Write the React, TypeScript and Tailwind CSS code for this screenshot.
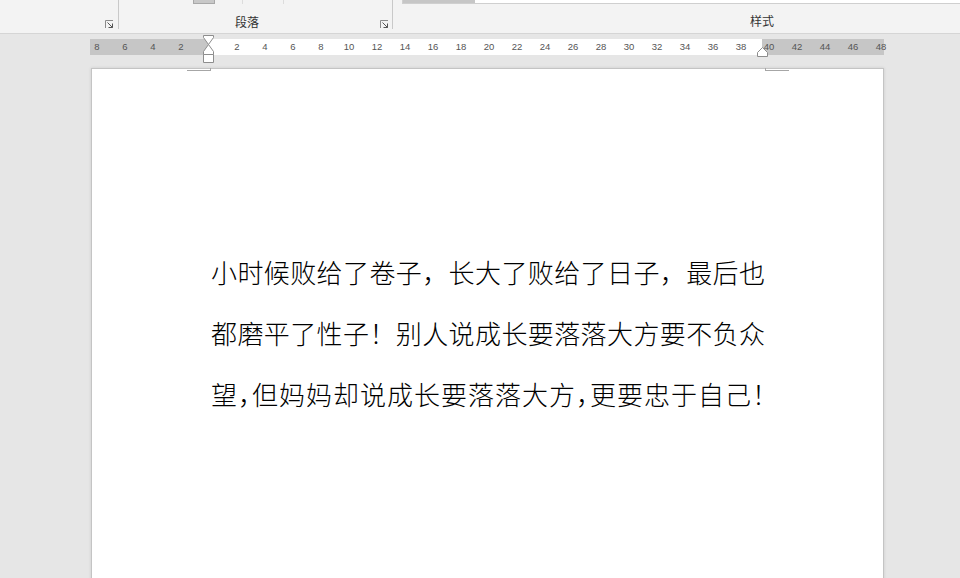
import React from 'react';

const cjk = { fontFamily: '"Noto Sans CJK SC", "Microsoft YaHei", sans-serif' };

// ruler labels: unit 0 sits at the left indent, 14px per unit
const rulerNums = [
  ...[8, 6, 4, 2].map((n) => ({ n, pos: -n })),
  ...Array.from({ length: 24 }, (_, i) => ({ n: (i + 1) * 2, pos: (i + 1) * 2 })),
];

function Launcher() {
  return (
    <svg width="9" height="9" viewBox="0 0 9 9" className="block">
      <path d="M0.5 8 V0.5 H8" fill="none" stroke="#8a8a8a" strokeWidth="1" />
      <path d="M2.5 2.5 L7.5 7.5 M3.5 7.5 H7.5 V3.5" fill="none" stroke="#555" strokeWidth="1" />
    </svg>
  );
}

function Ribbon() {
  return (
    <div className="flex h-[34px] bg-[#f3f3f3] border-b border-[#d5d5d5] text-[12px] leading-[16px] text-[#333]" style={cjk}>
      <div className="flex items-end justify-end w-[119px] h-[29px] pr-[4px] border-r border-[#c9c9c9]">
        <Launcher />
      </div>
      <div className="flex flex-col w-[274px] h-[29px] border-r border-[#c9c9c9]">
        <div className="flex h-[4px] pl-[74px]">
          <div className="w-[22px] bg-[#c8c8c8] border-x border-b border-[#a8a8a8]" />
          <div className="ml-[27px] w-px bg-[#dcdcdc]" />
          <div className="ml-[40px] w-px bg-[#dcdcdc]" />
        </div>
        <div className="flex flex-1 items-end pl-[116px] pr-[3px]">
          <span className="mb-[-1px]">段落</span>
          <span className="flex-1" />
          <Launcher />
        </div>
      </div>
      <div className="flex flex-col flex-1 h-[29px]">
        <div className="ml-[9px] h-[5px] border-l border-b border-[#cfcfcf] bg-white">
          <div className="w-[72px] h-[3px] bg-[#c6c6c6]" />
        </div>
        <span className="ml-[357px] mt-[9px]">样式</span>
      </div>
    </div>
  );
}

function Ruler() {
  return (
    <div className="relative mt-[5px] ml-[90px] w-[794px] h-[16px] flex">
      <div className="w-[119px] bg-[#c6c6c6]" />
      <div className="w-[553px] bg-white" />
      <div className="flex-1 bg-[#c6c6c6]" />
      {rulerNums.map(({ n, pos }) => (
        <span
          key={pos}
          className="absolute top-0 h-[16px] w-[20px] -ml-[10px] text-center leading-[16px] text-[9.5px] text-[#555]"
          style={{ left: 119 + pos * 14, fontFamily: '"Liberation Sans", Arial, sans-serif' }}
        >
          {n}
        </span>
      ))}
      {/* left indent marker */}
      <svg width="12" height="30" viewBox="0 0 12 30" className="absolute left-[113px] -top-[4px]">
        <path d="M0.5 0.5 H10.5 V2.5 L5.5 9.5 L0.5 2.5 Z" fill="#fff" stroke="#8d8d8d" />
        <path d="M5.5 9.5 L10.5 16.5 V19.5 H0.5 V16.5 Z" fill="#fff" stroke="#8d8d8d" />
        <path d="M0.5 19.5 H10.5 V27.5 H0.5 Z" fill="#fff" stroke="#8d8d8d" />
      </svg>
      {/* right indent marker */}
      <svg width="12" height="11" viewBox="0 0 12 11" className="absolute left-[667px] top-[8px]">
        <path d="M5.5 0.5 L10.5 5.5 V9.5 H0.5 V5.5 Z" fill="#fff" stroke="#8d8d8d" />
      </svg>
    </div>
  );
}

function Page() {
  const halt = "[font-feature-settings:'halt']";
  const lines = [
    <>小时候败给了卷子，长大了败给了日子，最后也</>,
    <>都磨平了性子！别人说成长要落落大方要不负众</>,
    <>
      望<span className={halt}>，</span>但妈妈却说成长要落落大方<span className={halt}>，</span>更要忠于自己
      <span className={halt}>！</span>
    </>,
  ];
  return (
    <div className="mt-[13px] ml-[91px] w-[793px] h-[520px] bg-white border border-[#c4c4c4] shadow-[0_0_3px_rgba(0,0,0,0.12)]">
      {/* margin corner marks */}
      <div className="flex h-[3px] -mt-px">
        <div className="ml-[95px] w-[24px] border-r border-b border-[#a6a6a6]" />
        <div className="ml-[554px] w-[24px] border-l border-b border-[#a6a6a6]" />
      </div>
      <div className="pt-[170px] pl-[119px]">
        <div className="w-[554px] text-[26px] font-light leading-[61px] text-black" style={cjk}>
          {lines.map((l, i) => (
            <div key={i} className="text-justify [text-align-last:justify] whitespace-nowrap">
              {l}
            </div>
          ))}
        </div>
      </div>
    </div>
  );
}

export default function App() {
  return (
    <div className="w-[960px] h-[578px] overflow-hidden bg-[#e6e6e6]">
      <Ribbon />
      <Ruler />
      <Page />
    </div>
  );
}
